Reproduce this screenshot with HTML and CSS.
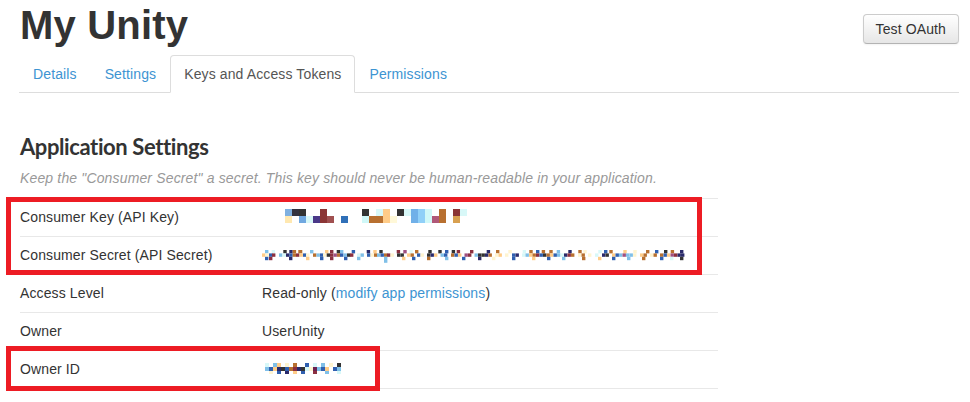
FILE: index.html
```html
<!DOCTYPE html>
<html lang="en">
<head>
<meta charset="utf-8">
<title>My Unity</title>
<link rel="stylesheet" href="styles.css">
</head>
<body>
<div class="page">
  <header class="header">
    <h1 class="title">My Unity</h1>
    <button class="btn" type="button">Test OAuth</button>
  </header>
  <ul class="tabs">
    <li><a href="#">Details</a></li>
    <li><a href="#">Settings</a></li>
    <li class="active"><a href="#">Keys and Access Tokens</a></li>
    <li><a href="#">Permissions</a></li>
  </ul>
  <h2 class="section-title">Application Settings</h2>
  <p class="hint">Keep the "Consumer Secret" a secret. This key should never be human-readable in your application.</p>
  <table class="settings">
    <tr>
      <td class="label">Consumer Key (API Key)</td>
      <td class="value">
        <svg class="blob" width="220" height="20" viewBox="0 0 220 20">
          <g transform="translate(0,2)">
            <rect x="23" width="7" height="7" fill="#7fb0e0"/>
            <rect x="30" width="7" height="7" fill="#333340"/>
            <rect x="37" width="7" height="7" fill="#333"/>
            <rect x="58" width="7" height="7" fill="#8b3535"/>
            <rect x="100" width="7" height="7" fill="#333"/>
            <rect x="114" width="7" height="7" fill="#d8f8f8"/>
            <rect x="121" width="7" height="7" fill="#ffcc88"/>
            <rect x="135" width="7" height="7" fill="#333"/>
            <rect x="142" width="7" height="7" fill="#d8f8f8"/>
            <rect x="149" width="7" height="7" fill="#70b0e8"/>
            <rect x="156" width="7" height="7" fill="#90d0f8"/>
            <rect x="163" width="7" height="7" fill="#d0f8f8"/>
            <rect x="177" width="7" height="7" fill="#b87030"/>
            <rect x="191" width="7" height="7" fill="#8b3535"/>
            <rect x="198" width="7" height="7" fill="#d8f8f8"/>
          </g>
          <g transform="translate(0,9)">
            <rect x="23" width="7" height="7" fill="#ffe8b0"/>
            <rect x="37" width="7" height="7" fill="#70a8e0"/>
            <rect x="44" width="7" height="7" fill="#d8f8f8"/>
            <rect x="51" width="7" height="7" fill="#4a3888"/>
            <rect x="58" width="7" height="7" fill="#8b3535"/>
            <rect x="65" width="7" height="7" fill="#a05050"/>
            <rect x="79" width="7" height="7" fill="#3070b8"/>
            <rect x="100" width="7" height="7" fill="#d0f8f8"/>
            <rect x="107" width="7" height="7" fill="#b87030"/>
            <rect x="114" width="7" height="7" fill="#b87030"/>
            <rect x="121" width="7" height="7" fill="#ffcc88"/>
            <rect x="128" width="7" height="7" fill="#fff8d8"/>
            <rect x="149" width="7" height="7" fill="#70b0e8"/>
            <rect x="156" width="7" height="7" fill="#90d0f8"/>
            <rect x="163" width="7" height="7" fill="#d0f8f8"/>
            <rect x="170" width="7" height="7" fill="#b05878"/>
            <rect x="177" width="7" height="7" fill="#b87030"/>
            <rect x="191" width="7" height="7" fill="#d8a050"/>
          </g>
        </svg>
      </td>
    </tr>
    <tr>
      <td class="label">Consumer Secret (API Secret)</td>
      <td class="value">
        <svg class="blob" width="430" height="20" viewBox="0 0 430 20">
          <g transform="translate(0,5)">
            <rect x="3" width="3.4" height="3.4" fill="#80c0e8"/>
            <rect x="9.7" width="3.4" height="3.4" fill="#d8f8f8"/>
            <rect x="21.3" width="3.4" height="3.4" fill="#333"/>
            <rect x="27.3" width="3.4" height="3.4" fill="#2a2a6a"/>
            <rect x="30.7" width="3.4" height="3.4" fill="#b87030"/>
            <rect x="36.3" width="4" height="3.4" fill="#b87030"/>
            <rect x="48" width="3.4" height="3.4" fill="#80c0e8"/>
            <rect x="63" width="3.4" height="3.4" fill="#ffcc88"/>
            <rect x="68" width="3.4" height="3.4" fill="#8b3040"/>
            <rect x="74.7" width="3.4" height="3.4" fill="#333"/>
            <rect x="78" width="3.4" height="3.4" fill="#80c0e8"/>
            <rect x="89.7" width="3.4" height="3.4" fill="#3060b0"/>
            <rect x="104.7" width="3.4" height="3.4" fill="#2a2a6a"/>
            <rect x="111.3" width="3.4" height="3.4" fill="#ffcc88"/>
            <rect x="117.3" width="3.4" height="3.4" fill="#333"/>
            <rect x="134.7" width="3.4" height="3.4" fill="#8b3040"/>
            <rect x="141.3" width="3.4" height="3.4" fill="#a05080"/>
            <rect x="147.3" width="3.4" height="3.4" fill="#e0f8f8"/>
            <rect x="153" width="3.4" height="3.4" fill="#b87030"/>
            <rect x="166.3" width="3.4" height="3.4" fill="#333"/>
            <rect x="176.3" width="3.4" height="3.4" fill="#333"/>
            <rect x="183" width="3.4" height="3.4" fill="#3060b0"/>
            <rect x="189.7" width="3.4" height="3.4" fill="#333"/>
            <rect x="194.7" width="3.4" height="3.4" fill="#8b3040"/>
            <rect x="208" width="3.4" height="3.4" fill="#8b3040"/>
            <rect x="224.7" width="3.4" height="3.4" fill="#2a2a6a"/>
            <rect x="234" width="3.4" height="3.4" fill="#b87030"/>
            <rect x="246.3" width="3.4" height="3.4" fill="#fff4d0"/>
            <rect x="260.7" width="3.4" height="3.4" fill="#d8f8f8"/>
            <rect x="267.3" width="3.4" height="3.4" fill="#b87030"/>
            <rect x="274" width="3.4" height="3.4" fill="#3060b0"/>
            <rect x="279.7" width="3.4" height="3.4" fill="#b87030"/>
            <rect x="287.3" width="3.4" height="3.4" fill="#b87030"/>
            <rect x="294.7" width="3.4" height="3.4" fill="#80c0e8"/>
            <rect x="306.3" width="3.4" height="3.4" fill="#2a2a6a"/>
            <rect x="316.3" width="3.4" height="3.4" fill="#b87030"/>
            <rect x="321.3" width="3.4" height="3.4" fill="#fff4d0"/>
            <rect x="336.3" width="3.4" height="3.4" fill="#d8f8f8"/>
            <rect x="342" width="3.4" height="3.4" fill="#3060b0"/>
            <rect x="347.3" width="3.4" height="3.4" fill="#b87030"/>
            <rect x="361.3" width="3.4" height="3.4" fill="#ffcc88"/>
            <rect x="371.3" width="3.4" height="3.4" fill="#fff4d0"/>
            <rect x="384" width="3.4" height="3.4" fill="#b87030"/>
            <rect x="393" width="3.4" height="3.4" fill="#3060b0"/>
            <rect x="402" width="3.4" height="3.4" fill="#333"/>
            <rect x="408.7" width="3.4" height="3.4" fill="#b87030"/>
            <rect x="418" width="3.4" height="3.4" fill="#2a2a6a"/>
          </g>
          <g transform="translate(0,8.4)">
            <rect x="0" width="3.4" height="3.4" fill="#ffcc88"/>
            <rect x="3.4" width="3.4" height="3.4" fill="#fff4d0"/>
            <rect x="7" width="3.4" height="3.4" fill="#3060b0"/>
            <rect x="10" width="3.4" height="3.4" fill="#8b3040"/>
            <rect x="17" width="3.4" height="3.4" fill="#80c0e8"/>
            <rect x="20.5" width="3.4" height="3.4" fill="#d8f8f8"/>
            <rect x="24" width="3.4" height="3.4" fill="#2a2a6a"/>
            <rect x="27.3" width="3.4" height="3.4" fill="#3060b0"/>
            <rect x="30.7" width="3.4" height="3.4" fill="#b87030"/>
            <rect x="34" width="3.4" height="3.4" fill="#8b3040"/>
            <rect x="37.5" width="3.4" height="3.4" fill="#ffcc88"/>
            <rect x="41" width="3.4" height="3.4" fill="#3060b0"/>
            <rect x="44" width="3.4" height="3.4" fill="#fff4d0"/>
            <rect x="51" width="3.4" height="3.4" fill="#b87030"/>
            <rect x="54.5" width="3.4" height="3.4" fill="#80c0e8"/>
            <rect x="58" width="3.4" height="3.4" fill="#3060b0"/>
            <rect x="61" width="3.4" height="3.4" fill="#fff4d0"/>
            <rect x="64.7" width="3.4" height="3.4" fill="#333"/>
            <rect x="68" width="3.4" height="3.4" fill="#8b3040"/>
            <rect x="71.5" width="3.4" height="3.4" fill="#a05080"/>
            <rect x="75" width="3.4" height="3.4" fill="#b87030"/>
            <rect x="78" width="3.4" height="3.4" fill="#3060b0"/>
            <rect x="81.5" width="3.4" height="3.4" fill="#80c0e8"/>
            <rect x="85" width="3.4" height="3.4" fill="#333"/>
            <rect x="88" width="3.4" height="3.4" fill="#8b3040"/>
            <rect x="95" width="3.4" height="3.4" fill="#d8f8f8"/>
            <rect x="98.5" width="3.4" height="3.4" fill="#80c0e8"/>
            <rect x="105" width="3.4" height="3.4" fill="#3060b0"/>
            <rect x="108.5" width="3.4" height="3.4" fill="#fff4d0"/>
            <rect x="112" width="3.4" height="3.4" fill="#b87030"/>
            <rect x="115" width="3.4" height="3.4" fill="#80c0e8"/>
            <rect x="118.5" width="3.4" height="3.4" fill="#3060b0"/>
            <rect x="122" width="3.4" height="3.4" fill="#b87030"/>
            <rect x="125" width="3.4" height="3.4" fill="#8b3040"/>
            <rect x="128.5" width="3.4" height="3.4" fill="#fff4d0"/>
            <rect x="135" width="3.4" height="3.4" fill="#333"/>
            <rect x="138.5" width="3.4" height="3.4" fill="#333"/>
            <rect x="145" width="3.4" height="3.4" fill="#ffcc88"/>
            <rect x="148.5" width="3.4" height="3.4" fill="#b87030"/>
            <rect x="155" width="3.4" height="3.4" fill="#3060b0"/>
            <rect x="158.5" width="3.4" height="3.4" fill="#fff4d0"/>
            <rect x="165" width="3.4" height="3.4" fill="#333"/>
            <rect x="168.5" width="3.4" height="3.4" fill="#2a2a6a"/>
            <rect x="172" width="3.4" height="3.4" fill="#ffcc88"/>
            <rect x="178.5" width="3.4" height="3.4" fill="#80c0e8"/>
            <rect x="182" width="3.4" height="3.4" fill="#3060b0"/>
            <rect x="189" width="3.4" height="3.4" fill="#b87030"/>
            <rect x="192.5" width="3.4" height="3.4" fill="#3060b0"/>
            <rect x="196" width="3.4" height="3.4" fill="#ffcc88"/>
            <rect x="202.5" width="3.4" height="3.4" fill="#a05080"/>
            <rect x="206" width="3.4" height="3.4" fill="#8b3040"/>
            <rect x="212.5" width="3.4" height="3.4" fill="#80c0e8"/>
            <rect x="216" width="3.4" height="3.4" fill="#333"/>
            <rect x="219.5" width="3.4" height="3.4" fill="#333"/>
            <rect x="223" width="3.4" height="3.4" fill="#2a2a6a"/>
            <rect x="226.5" width="3.4" height="3.4" fill="#b87030"/>
            <rect x="233" width="3.4" height="3.4" fill="#fff4d0"/>
            <rect x="236.5" width="3.4" height="3.4" fill="#ffcc88"/>
            <rect x="243" width="3.4" height="3.4" fill="#fff4d0"/>
            <rect x="250" width="3.4" height="3.4" fill="#3060b0"/>
            <rect x="253.5" width="3.4" height="3.4" fill="#2a2a6a"/>
            <rect x="260" width="3.4" height="3.4" fill="#d8f8f8"/>
            <rect x="263.5" width="3.4" height="3.4" fill="#80c0e8"/>
            <rect x="267" width="3.4" height="3.4" fill="#ffcc88"/>
            <rect x="270.5" width="3.4" height="3.4" fill="#b87030"/>
            <rect x="274" width="3.4" height="3.4" fill="#8b3040"/>
            <rect x="277.5" width="3.4" height="3.4" fill="#3060b0"/>
            <rect x="281" width="3.4" height="3.4" fill="#333"/>
            <rect x="284.5" width="3.4" height="3.4" fill="#b87030"/>
            <rect x="288" width="3.4" height="3.4" fill="#ffcc88"/>
            <rect x="291.5" width="3.4" height="3.4" fill="#3060b0"/>
            <rect x="295" width="3.4" height="3.4" fill="#80c0e8"/>
            <rect x="298.5" width="3.4" height="3.4" fill="#d8f8f8"/>
            <rect x="302" width="3.4" height="3.4" fill="#2a2a6a"/>
            <rect x="305.5" width="3.4" height="3.4" fill="#8b3040"/>
            <rect x="309" width="3.4" height="3.4" fill="#b87030"/>
            <rect x="316" width="3.4" height="3.4" fill="#fff4d0"/>
            <rect x="319.5" width="3.4" height="3.4" fill="#b87030"/>
            <rect x="326" width="3.4" height="3.4" fill="#fff4d0"/>
            <rect x="333" width="3.4" height="3.4" fill="#d8f8f8"/>
            <rect x="340" width="3.4" height="3.4" fill="#2a2a6a"/>
            <rect x="343.5" width="3.4" height="3.4" fill="#333"/>
            <rect x="350" width="3.4" height="3.4" fill="#ffcc88"/>
            <rect x="353.5" width="3.4" height="3.4" fill="#3060b0"/>
            <rect x="357" width="3.4" height="3.4" fill="#80c0e8"/>
            <rect x="360.5" width="3.4" height="3.4" fill="#a05080"/>
            <rect x="364" width="3.4" height="3.4" fill="#80c0e8"/>
            <rect x="367.5" width="3.4" height="3.4" fill="#80c0e8"/>
            <rect x="371" width="3.4" height="3.4" fill="#fff4d0"/>
            <rect x="378" width="3.4" height="3.4" fill="#ffcc88"/>
            <rect x="381.5" width="3.4" height="3.4" fill="#b87030"/>
            <rect x="388" width="3.4" height="3.4" fill="#fff4d0"/>
            <rect x="391.5" width="3.4" height="3.4" fill="#b87030"/>
            <rect x="398" width="3.4" height="3.4" fill="#b87030"/>
            <rect x="401.5" width="3.4" height="3.4" fill="#3060b0"/>
            <rect x="405" width="3.4" height="3.4" fill="#ffcc88"/>
            <rect x="408.5" width="3.4" height="3.4" fill="#a05080"/>
            <rect x="412" width="3.4" height="3.4" fill="#8b3040"/>
            <rect x="415.5" width="3.4" height="3.4" fill="#2a2a6a"/>
            <rect x="419" width="3.4" height="3.4" fill="#2a2a6a"/>
          </g>
          <g transform="translate(0,11.8)">
            <rect x="3" width="3.4" height="3.4" fill="#3060b0"/>
            <rect x="7" width="3.4" height="3.4" fill="#8b3040"/>
            <rect x="27" width="3.4" height="3.4" fill="#2a2a6a"/>
            <rect x="44" width="3.4" height="3.4" fill="#ffcc88"/>
            <rect x="58" width="3.4" height="3.4" fill="#3060b0"/>
            <rect x="68" width="3.4" height="3.4" fill="#8b3040"/>
            <rect x="82" width="3.4" height="3.4" fill="#3060b0"/>
            <rect x="95" width="3.4" height="3.4" fill="#80c0e8"/>
            <rect x="122" width="3.4" height="6" fill="#80c0e8"/>
            <rect x="140" width="3.4" height="3.4" fill="#ffcc88"/>
            <rect x="150" width="3.4" height="3.4" fill="#3060b0"/>
            <rect x="165" width="3.4" height="3.4" fill="#b87030"/>
            <rect x="183" width="3.4" height="3.4" fill="#80c0e8"/>
            <rect x="200" width="3.4" height="3.4" fill="#3060b0"/>
            <rect x="216" width="3.4" height="3.4" fill="#2a2a6a"/>
            <rect x="230" width="3.4" height="3.4" fill="#fff4d0"/>
            <rect x="250" width="3.4" height="3.4" fill="#3060b0"/>
            <rect x="270" width="3.4" height="3.4" fill="#ffcc88"/>
            <rect x="285" width="3.4" height="3.4" fill="#3060b0"/>
            <rect x="300" width="3.4" height="3.4" fill="#80c0e8"/>
            <rect x="320" width="3.4" height="3.4" fill="#b87030"/>
            <rect x="336" width="3.4" height="3.4" fill="#ffcc88"/>
            <rect x="350" width="3.4" height="3.4" fill="#3060b0"/>
            <rect x="365" width="3.4" height="3.4" fill="#80c0e8"/>
            <rect x="380" width="3.4" height="3.4" fill="#b87030"/>
            <rect x="398" width="3.4" height="3.4" fill="#3060b0"/>
            <rect x="408" width="3.4" height="3.4" fill="#d8f8f8"/>
            <rect x="418" width="3.4" height="3.4" fill="#333"/>
          </g>
        </svg>
      </td>
    </tr>
    <tr>
      <td class="label">Access Level</td>
      <td class="value">Read-only (<a class="link" href="#">modify app permissions</a>)</td>
    </tr>
    <tr>
      <td class="label">Owner</td>
      <td class="value">UserUnity</td>
    </tr>
    <tr>
      <td class="label">Owner ID</td>
      <td class="value">
        <svg class="blob" width="90" height="20" viewBox="0 0 90 20">
          <g transform="translate(0,4)">
            <rect x="3" width="4" height="4" fill="#d8f8f8"/>
            <rect x="11" width="4" height="4" fill="#80c0e8"/>
            <rect x="15" width="4" height="4" fill="#ffcc88"/>
            <rect x="23" width="4" height="4" fill="#fff4d0"/>
            <rect x="31" width="4" height="4" fill="#b87030"/>
            <rect x="43" width="4" height="4" fill="#3060b0"/>
            <rect x="51" width="4" height="4" fill="#d8f8f8"/>
            <rect x="59" width="4" height="4" fill="#80c0e8"/>
            <rect x="67" width="4" height="4" fill="#fff4d0"/>
            <rect x="75" width="4" height="4" fill="#333"/>
          </g>
          <g transform="translate(0,8)">
            <rect x="3" width="4" height="4" fill="#80c0e8"/>
            <rect x="7" width="4" height="4" fill="#3060b0"/>
            <rect x="11" width="4" height="4" fill="#ffcc88"/>
            <rect x="15" width="4" height="4" fill="#2a2a6a"/>
            <rect x="19" width="4" height="4" fill="#333"/>
            <rect x="23" width="4" height="4" fill="#3060b0"/>
            <rect x="27" width="4" height="4" fill="#b87030"/>
            <rect x="31" width="4" height="4" fill="#8b3040"/>
            <rect x="35" width="4" height="4" fill="#2a2a6a"/>
            <rect x="39" width="4" height="4" fill="#333"/>
            <rect x="43" width="4" height="4" fill="#d8f8f8"/>
            <rect x="47" width="4" height="4" fill="#fff4d0"/>
            <rect x="51" width="4" height="4" fill="#6a2050"/>
            <rect x="55" width="4" height="4" fill="#80c0e8"/>
            <rect x="59" width="4" height="4" fill="#3060b0"/>
            <rect x="63" width="4" height="4" fill="#ffcc88"/>
            <rect x="71" width="4" height="4" fill="#3060b0"/>
            <rect x="75" width="4" height="4" fill="#80c0e8"/>
          </g>
          <g transform="translate(0,12)">
            <rect x="7" width="4" height="3" fill="#fff4d0"/>
            <rect x="15" width="4" height="3" fill="#3060b0"/>
            <rect x="23" width="4" height="3" fill="#2a2a6a"/>
            <rect x="31" width="4" height="3" fill="#ffcc88"/>
            <rect x="39" width="4" height="3" fill="#3060b0"/>
            <rect x="51" width="4" height="3" fill="#8b3040"/>
            <rect x="63" width="4" height="3" fill="#80c0e8"/>
            <rect x="75" width="4" height="3" fill="#d8f8f8"/>
          </g>
        </svg>
      </td>
    </tr>
  </table>
</div>
<div class="mark mark-keys"></div>
<div class="mark mark-owner"></div>
</body>
</html>
```

FILE: styles.css
```css
* {
  box-sizing: border-box;
}

body {
  margin: 0;
  background: #fff;
  color: #333;
  font-family: "Liberation Sans", Arial, sans-serif;
  font-size: 14px;
  line-height: 20px;
  letter-spacing: 0.12px;
}

.page {
  padding: 0 11px 0 19px;
}

.header {
  display: flex;
  justify-content: space-between;
  align-items: flex-start;
  height: 55px;
  padding-top: 5px;
}

.title {
  margin: 0 0 0 1px;
  font-size: 40px;
  line-height: 40px;
  font-weight: bold;
  letter-spacing: 0.2px;
  color: #333;
}

.btn {
  margin-top: 9px;
  height: 30px;
  padding: 4px 12px;
  font-family: "Liberation Sans", Arial, sans-serif;
  font-size: 14px;
  line-height: 20px;
  letter-spacing: 0.12px;
  color: #333;
  background: linear-gradient(#ffffff, #e6e6e6);
  border: 1px solid #cccccc;
  border-bottom-color: #b3b3b3;
  border-radius: 4px;
  box-shadow: inset 0 1px 0 rgba(255, 255, 255, 0.2), 0 1px 2px rgba(0, 0, 0, 0.05);
}

.tabs {
  display: flex;
  list-style: none;
  margin: 0;
  padding: 0;
  border-bottom: 1px solid #ddd;
}

.tabs li {
  margin-bottom: -1px;
}

.tabs a {
  display: block;
  padding: 8px 13px;
  line-height: 20px;
  border: 1px solid transparent;
  border-radius: 4px 4px 0 0;
  color: #3d94d2;
  text-decoration: none;
}

.tabs .active a {
  border-color: #ddd #ddd transparent;
  background: #fff;
  color: #555;
}

.section-title {
  margin: 39px 0 0 1px;
  font-family: Lato, "Open Sans", sans-serif;
  font-weight: 700;
  font-size: 22px;
  line-height: 30px;
  letter-spacing: -0.4px;
  color: #333;
}

.hint {
  margin: 6px 0 0 1px;
  font-style: italic;
  color: #999;
  line-height: 20px;
  letter-spacing: 0.15px;
}

.settings {
  margin: 10px 0 0 1px;
  width: 698px;
  border-collapse: collapse;
}

.settings td {
  border-top: 1px solid #e8e8e8;
  padding: 8px 0 9px;
  line-height: 20px;
  height: 38px;
  vertical-align: top;
  color: #333;
}

.settings tr:last-child td {
  border-bottom: 1px solid #e8e8e8;
}

.settings .label {
  width: 242px;
}

.link {
  color: #3d94d2;
  text-decoration: none;
}

.blob {
  display: block;
}

.mark {
  position: absolute;
  border: 5px solid #ed1c24;
}

.mark-keys {
  left: 6px;
  top: 197px;
  width: 696px;
  height: 78px;
}

.mark-owner {
  left: 6px;
  top: 346px;
  width: 374px;
  height: 45px;
}
```
